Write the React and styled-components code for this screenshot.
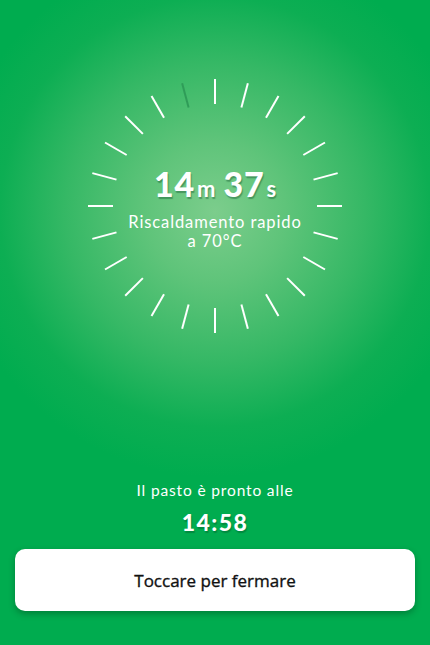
import React from "react";
import styled, { createGlobalStyle } from "styled-components";

const GlobalStyle = createGlobalStyle`
  html, body {
    margin: 0;
    padding: 0;
    background: #00ac4f;
  }
  * {
    box-sizing: border-box;
  }
`;

const Screen = styled.div`
  width: 430px;
  height: 645px;
  display: flex;
  flex-direction: column;
  align-items: center;
  background: radial-gradient(
    circle at 215px 212px,
    #7ccd8c 0px,
    #5fc47a 70px,
    #35b865 150px,
    #0dae53 215px,
    #00ac4f 265px
  );
  font-family: "Lato", "Noto Sans", sans-serif;
  color: #fff;
`;

const Dial = styled.div`
  margin-top: 76px;
  display: grid;
  place-items: center;
  width: 260px;
  height: 260px;

  & > * {
    grid-area: 1 / 1;
  }
`;

const Readout = styled.div`
  display: flex;
  flex-direction: column;
  align-items: center;
  margin-top: 2px;
`;

const Countdown = styled.div`
  display: flex;
  align-items: baseline;
  gap: 8px;
  font-weight: 900;
  text-shadow: 1px 2px 1px rgba(0, 60, 30, 0.35);
`;

const Value = styled.span`
  font-size: 34px;
  letter-spacing: 0.8px;
`;

const Unit = styled.span`
  font-size: 22px;
  font-weight: 700;
  margin-left: 2px;
`;

const Part = styled.span`
  display: flex;
  align-items: baseline;
`;

const Caption = styled.div`
  margin-top: 9px;
  font-size: 16.5px;
  line-height: 19px;
  text-align: center;
  letter-spacing: 0.9px;
`;

const Spacer = styled.div`
  flex: 1;
`;

const Ready = styled.div`
  font-size: 15.5px;
  letter-spacing: 0.85px;
  line-height: 20px;
  margin-bottom: 1px;
`;

const ReadyTime = styled.div`
  margin-top: 8px;
  font-size: 23px;
  font-weight: 900;
  line-height: 26px;
  letter-spacing: 1.4px;
  text-shadow: 1px 2px 1px rgba(0, 60, 30, 0.3);
`;

const StopButton = styled.button`
  margin: 14px 15px 34px;
  width: 400px;
  height: 62px;
  border: none;
  border-radius: 10px;
  background: #fff;
  box-shadow: 0 3px 6px rgba(0, 50, 20, 0.35);
  font-family: "Open Sans", "Noto Sans", sans-serif;
  font-size: 17px;
  font-weight: 500;
  -webkit-text-stroke: 0.35px #111;
  color: #111;
  cursor: pointer;
`;

const ticks = Array.from({ length: 24 }, (_, i) => i * 15);

function Ticks() {
  const c = 130;
  const rIn = 102;
  const rOut = 127;
  return (
    <svg width="260" height="260" viewBox="0 0 260 260">
      {ticks.map((deg) => {
        const a = ((deg - 90) * Math.PI) / 180;
        const dim = deg === 345;
        return (
          <line
            key={deg}
            x1={c + rIn * Math.cos(a)}
            y1={c + rIn * Math.sin(a)}
            x2={c + rOut * Math.cos(a)}
            y2={c + rOut * Math.sin(a)}
            stroke={dim ? "#2f9c58" : "#ffffff"}
            strokeWidth="2"
          />
        );
      })}
    </svg>
  );
}

export default function App() {
  return (
    <>
      <GlobalStyle />
      <Screen>
        <Dial>
          <Ticks />
          <Readout>
            <Countdown>
              <Part>
                <Value>14</Value>
                <Unit>m</Unit>
              </Part>
              <Part>
                <Value>37</Value>
                <Unit>s</Unit>
              </Part>
            </Countdown>
            <Caption>
              Riscaldamento rapido
              <br />a 70°C
            </Caption>
          </Readout>
        </Dial>
        <Spacer />
        <Ready>Il pasto è pronto alle</Ready>
        <ReadyTime>14:58</ReadyTime>
        <StopButton>Toccare per fermare</StopButton>
      </Screen>
    </>
  );
}
